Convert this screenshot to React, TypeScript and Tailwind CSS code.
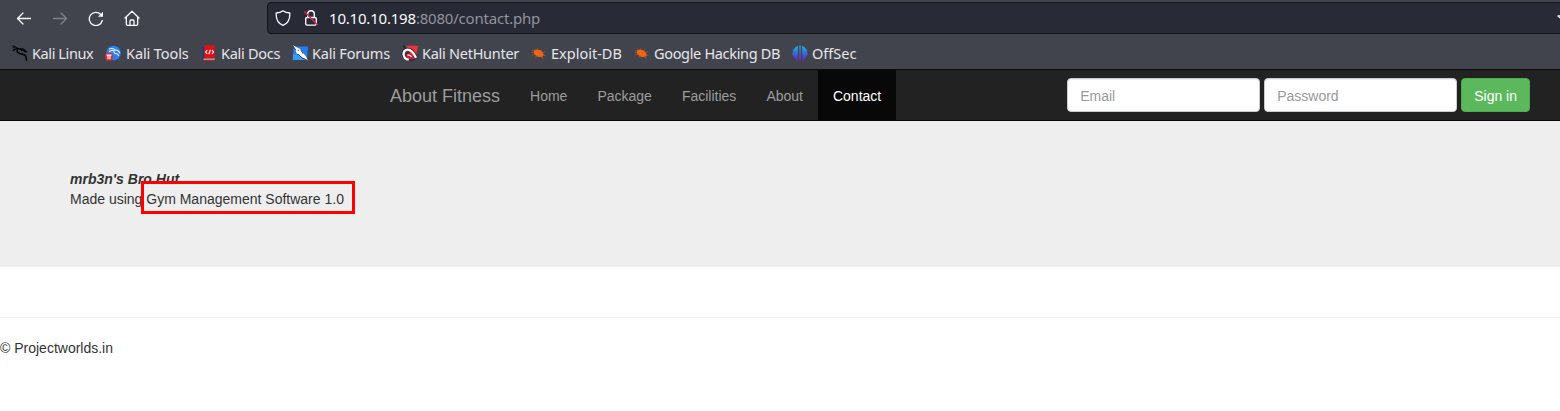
import React from "react";

function DragonStroke({ color }: { color: string }) {
  return (
    <g fill="none" stroke={color} strokeLinecap="round">
      <path d="M.6 .8C2.500 1.400 4 1.800 5.600 3M.5 2.800C2.600 2.400 4 2.700 5.500 3.600" strokeWidth=".9" />
      <path d="M1.200 5.200C3.400 4 5.600 3.200 7.600 3.800L10.500 5.200" strokeWidth="1.400" />
      <path d="M5.800 4.200C4.400 6.200 5.200 8 8 8.600c3 .4 5.400 1 6 3.200.2 1.200.2 2.200.6 3.600" strokeWidth="1.600" />
      <path d="M8.600 3.600c2 0 4.200 1 5 2.600l1.200.5M9.500 5.200c1.800 0 3.200.8 4.200 1.800" strokeWidth="1.100" />
    </g>
  );
}

const icons = {
  kali: <DragonStroke color="#050607" />,
  tools: (
    <>
      <circle cx="8.500" cy="8" r="7.300" fill="#2a7ff5" />
      <path d="M4 4c3-1 5-.5 6.500 1 2.400.2 3.600 1.200 4.400 3.200M4 6.800c2-1.500 3.500-1.800 5-1.200-.6 2 .8 2.800 2.500 3.200 1.400.4 2 1.200 2.200 2.400" fill="none" stroke="#e9f3ff" strokeWidth="1.100" />
      <circle cx="4" cy="11.800" r="4" fill="#e8232d" />
      <path d="M1.500 10.200h5M3 10.200v4M5 10.200v4" fill="none" stroke="#fff" strokeWidth="1.200" />
    </>
  ),
  docs: (
    <>
      <path d="M1.500 1h2.500v13H1.500z" fill="#263a73" />
      <path d="M3.200.3H13.800V13.200H3.200z" fill="#dd1016" />
      <path d="M2.500 13.600h11.300v1.200H2.500z" fill="#d9c9cc" />
      <path d="M2 14.800h11.800v.9H2z" fill="#dd1016" />
      <path d="M6.300 5 4.600 7l1.700 2M10.900 5l1.700 2-1.700 2M9.400 4.700 7.800 9.300" fill="none" stroke="#fff" strokeWidth="1.100" />
    </>
  ),
  forums: (
    <>
      <path d="M1.500 1.400H16L15 15H.8z" fill="#267df3" />
      <path d="M1 9l13 3-.3 3H.8z" fill="#369cf8" />
      <path d="M.5.3 3 1.200l2 1.400 3.600 1.600 2.400 3.600 3 3.800 1.800 4-4-2-4.500-3.400-3-2.300-.6-3z" fill="#fff" />
      <path d="m.5.5 3.200 4.300M8.600 4.500l2.500 4.300M6 9l4.500 4.300 4 1.400" fill="none" stroke="#263146" strokeWidth=".9" />
      <circle cx="6.200" cy="5.300" r=".6" fill="#263146" />
    </>
  ),
  hunter: (
    <>
      <path d="M4.500.8H16L13.800 12.500 8 10z" fill="#f0323b" />
      <path d="M1.200 11.400C-.6 7.500 2 3.600 5.800 3.700c3.800 0 6.800 4 8.800 8.800" fill="none" stroke="#24252c" strokeWidth="2" />
      <path d="M7.500 8 3 8.600l1 4.800 7.600 1.200 1.600-2z" fill="#c91b39" />
      <path d="M1.600 9.600C1.300 6.800 2.900 4.700 5.800 4.700c3.500 0 6 3.400 8.200 8" fill="none" stroke="#fff" strokeWidth="2.300" />
      <path d="M1.500 9.200c.3 3.200 2.500 5.400 5.300 5.400" fill="none" stroke="#fff" strokeWidth="2" />
      <path d="M3.600 10.500c.2-2.500 2.200-3.200 4-2.400" fill="none" stroke="#24252c" strokeWidth="1" />
      <path d="M5.500 10.200c1.700-.4 3 .2 4 1.600" fill="none" stroke="#fff" strokeWidth="1.300" />
      <path d="M7 15.200c2.800.3 4.800-.2 6.600-1.600" fill="none" stroke="#24252c" strokeWidth="1" />
      <path d="m1 .8 2.300 2.600" stroke="#202129" strokeWidth="1.300" />
    </>
  ),
  bug: (
    <>
      <ellipse cx="7.600" cy="8.300" rx="5.300" ry="3.300" transform="rotate(27 7.600 8.300)" fill="#f26412" />
      <path d="M2.500 5.200.7 5.600M4.500 5.500 3 4M6.500 5V3.500M9 6l2-1.300M11 7.500l3-.6M12 10l2.600.6M9.500 11.500l3 1.700M7 11l-3 1.300M4.500 9.500l-3.300.4M3 7.200.7 7.800" fill="none" stroke="#b85a24" strokeWidth=".7" />
    </>
  ),
  offsec: (
    <>
      <defs>
        <linearGradient id="offsec-fill" gradientUnits="userSpaceOnUse" x1="0" y1="1" x2="0" y2="15">
          <stop offset="0" stopColor="#18b3d3" />
          <stop offset=".5" stopColor="#3a6bd5" />
          <stop offset="1" stopColor="#6820c9" />
        </linearGradient>
      </defs>
      <path d="M5.900.9v14.200C2.500 14 .5 11.400.5 8S2.500 2 5.900.9zM7.300.6h1.400v14.800H7.300zM10.100.9c3.400 1.100 5.400 3.700 5.400 7.100s-2 6-5.400 7.100z" fill="url(#offsec-fill)" />
    </>
  ),
};

const bookmarks: { label: string; icon: keyof typeof icons; size: string }[] = [
  { label: "Kali Linux", icon: "kali", size: "w-[93px] gap-1 tracking-[-0.4px]" },
  { label: "Kali Tools", icon: "tools", size: "w-[96px] gap-[5px] tracking-[-0.1px]" },
  { label: "Kali Docs", icon: "docs", size: "w-[91px] gap-1 tracking-[-0.27px]" },
  { label: "Kali Forums", icon: "forums", size: "w-[110px] gap-1 tracking-[-0.2px]" },
  { label: "Kali NetHunter", icon: "hunter", size: "w-[129px] gap-1 tracking-[-0.27px]" },
  { label: "Exploit-DB", icon: "bug", size: "w-[103px] gap-1" },
  { label: "Google Hacking DB", icon: "bug", size: "w-[158px] gap-1 tracking-[-0.33px]" },
  { label: "OffSec", icon: "offsec", size: "w-[80px] gap-1" },
];

function BrowserChrome() {
  return (
    <header className="h-[70px] border-b border-[#0c0c0d] bg-[#42444d] font-['Noto_Sans',sans-serif] text-[#fbfbfe]">
      <div className="flex h-[37px] overflow-hidden">
        <div className="flex h-[36px] w-[267px] shrink-0 items-center gap-5 pl-4">
          <svg className="size-4" viewBox="0 0 16 16" fill="none" stroke="currentColor" strokeWidth="1.300" strokeLinecap="round" strokeLinejoin="round"><path d="M14.500 8.500H1.500M7 3 1.500 8.500 7 14" /></svg>
          <svg className="size-4 text-[#7f8087]" viewBox="0 0 16 16" fill="none" stroke="currentColor" strokeWidth="1.300" strokeLinecap="round" strokeLinejoin="round"><path d="M1.500 8.500h13M9 3l5.500 5.500L9 14" /></svg>
          <svg className="size-4" viewBox="0 0 16 16" fill="none" stroke="currentColor" strokeWidth="1.300" strokeLinecap="round"><path d="M14.300 10.500A6.600 6.600 0 1 1 12.600 4.300" /><path d="M15 1.800v5h-5z" fill="currentColor" stroke="none" /></svg>
          <svg className="size-4" viewBox="0 0 16 16" fill="none" stroke="currentColor" strokeWidth="1.300" strokeLinecap="round" strokeLinejoin="round"><path d="M1 8 8 1.300 15 8M2.300 7v7q0 1.400 1.400 1.400h8.600q1.400 0 1.400-1.400V7M6 15v-4q0-1 1-1h2q1 0 1 1v4" /></svg>
        </div>
        <div className="mt-[2px] flex h-8 w-[1310px] shrink-0 items-center rounded-[4px] border border-[#14151b] bg-[#282a36] pr-[3px] pl-[7px]">
          <svg className="size-4" viewBox="0 0 16 16" fill="none" stroke="currentColor" strokeWidth="1.300" strokeLinejoin="round"><path d="M8 .8C6 2.300 3.600 2.900 1.200 3c-.3 5.500 1.500 10.300 6.800 12.400C13.300 13.300 15.100 8.500 14.800 3 12.400 2.900 10 2.300 8 .8z" /></svg>
          <svg className="ml-3 size-4" viewBox="0 0 16 16" fill="none"><path d="M4.700 7.500V4a3.300 3.300 0 0 1 6.600 0v3.500M4 7.500h8q1.300 0 1.300 1.300v5q0 1.300-1.300 1.300H4q-1.300 0-1.300-1.300v-5Q2.700 7.500 4 7.500z" stroke="currentColor" strokeWidth="1.400" /><path d="m1.300 1.500 13.400 13.500" stroke="#e22850" strokeWidth="1.400" /></svg>
          <div className="ml-[10px] text-[15px] leading-5 tracking-[-0.2px] whitespace-nowrap">10.10.10.198<span className="text-[#92939b]">:8080/contact.php</span></div>
          <svg className="ml-auto size-4" viewBox="0 0 16 16" fill="none" stroke="currentColor" strokeWidth="1.300" strokeLinejoin="round"><path d="m8 .8 2 4.700 5 .5-3.800 3.300 1.200 5L8 11.700l-4.400 2.600 1.200-5L1 6l5-.5z" /></svg>
        </div>
      </div>
      <nav className="flex h-8 items-center pl-3 text-[14.500px] leading-5 text-[#e6e6e9]">
        {bookmarks.map(({ label, icon, size }) => (
          <a key={label} className={`flex shrink-0 items-center whitespace-nowrap ${size}`}>
            <svg className="size-4 shrink-0" viewBox="0 0 16 16">{icons[icon]}</svg>
            <span>{label}</span>
          </a>
        ))}
      </nav>
    </header>
  );
}

const links = ["Home", "Package", "Facilities", "About", "Contact"];
const inputClass =
  "h-[34px] w-[193px] rounded-[4px] border border-[#ccc] bg-white px-3 pt-[2px] text-[14px] text-[#555] shadow-[inset_0_1px_1px_rgba(0,0,0,0.075)] outline-none placeholder:text-[#999]";

export default function App() {
  return (
    <div className="h-[411px] w-[1560px] overflow-hidden bg-white font-['Liberation_Sans',Arial,sans-serif] text-[14px] leading-5 text-[#333]">
      <BrowserChrome />
      <nav className="flex h-[51px] justify-between border-b border-[#080808] bg-[#222] pr-[30px] pl-[375px] text-[#9d9d9d]">
        <div className="flex h-[50px]">
          <a className="px-[15px] pt-4 text-[18px] leading-5">About Fitness</a>
          {links.map((link) => (
            <a key={link} className={link === "Contact" ? "bg-[#080808] px-[15px] pt-4 text-white" : "px-[15px] pt-4"}>{link}</a>
          ))}
        </div>
        <form className="flex gap-1 pt-2" onSubmit={(event) => event.preventDefault()}>
          <input className={inputClass} type="text" placeholder="Email" />
          <input className={inputClass} type="password" placeholder="Password" />
          <button className="h-[34px] rounded-[4px] border border-[#4cae4c] bg-[#5cb85c] px-3 pt-[2px] text-white">Sign in</button>
        </form>
      </nav>
      <main className="h-[146px] bg-[#eee] pt-12 pl-[70px]">
        <p className="h-5 font-bold italic">mrb3n's Bro Hut</p>
        <p className="relative w-fit whitespace-nowrap">
          Made using Gym Management Software 1.0
          <span className="absolute -top-[8px] left-[71px] h-[33px] w-[214px] border-[3px] border-[#f00]" />
        </p>
      </main>
      <hr className="mt-[50px] border-t border-[#eee]" />
      <footer className="pt-5">© Projectworlds.in</footer>
    </div>
  );
}
